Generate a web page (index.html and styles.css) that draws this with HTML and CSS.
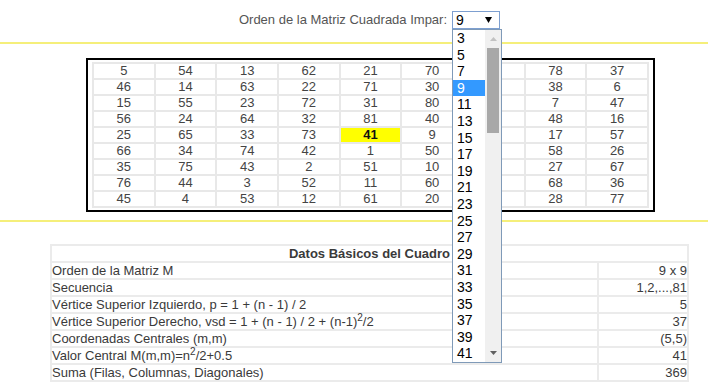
FILE: index.html
```html
<!DOCTYPE html>
<html lang="es">
<head>
<meta charset="utf-8">
<title>Cuadrado Mágico</title>
<link rel="stylesheet" href="styles.css">
</head>
<body>
<header class="controls">
  <label class="controls__label">Orden de la Matriz Cuadrada Impar:</label><div class="select">
    <span class="select__value">9</span>
    <svg class="select__arrow" width="7" height="6" viewBox="0 0 7 6"><path d="M0 0H7L3.5 6Z" fill="#000"/></svg>
    <div class="dropdown">
      <ul class="dropdown__list">
        <li>3</li><li>5</li><li>7</li><li class="is-selected">9</li><li>11</li><li>13</li><li>15</li><li>17</li><li>19</li><li>21</li>
        <li>23</li><li>25</li><li>27</li><li>29</li><li>31</li><li>33</li><li>35</li><li>37</li><li>39</li><li>41</li>
      </ul>
      <div class="dropdown__scroll">
        <div class="dropdown__btn"><svg width="7" height="4" viewBox="0 0 7 4"><path d="M0 4H7L3.5 0Z" fill="#c2c2c2"/></svg></div>
        <div class="dropdown__thumb"></div>
        <div class="dropdown__spacer"></div>
        <div class="dropdown__btn"><svg width="7" height="4" viewBox="0 0 7 4"><path d="M0 0H7L3.5 4Z" fill="#606060"/></svg></div>
      </div>
    </div>
  </div>
</header>
<div class="rule"></div>
<section class="matrix">
  <div class="matrix__frame">
    <table class="matrix__table">
      <tr><td>5</td><td>54</td><td>13</td><td>62</td><td>21</td><td>70</td><td>29</td><td>78</td><td>37</td></tr>
      <tr><td>46</td><td>14</td><td>63</td><td>22</td><td>71</td><td>30</td><td>79</td><td>38</td><td>6</td></tr>
      <tr><td>15</td><td>55</td><td>23</td><td>72</td><td>31</td><td>80</td><td>39</td><td>7</td><td>47</td></tr>
      <tr><td>56</td><td>24</td><td>64</td><td>32</td><td>81</td><td>40</td><td>8</td><td>48</td><td>16</td></tr>
      <tr><td>25</td><td>65</td><td>33</td><td>73</td><td class="is-center">41</td><td>9</td><td>49</td><td>17</td><td>57</td></tr>
      <tr><td>66</td><td>34</td><td>74</td><td>42</td><td>1</td><td>50</td><td>18</td><td>58</td><td>26</td></tr>
      <tr><td>35</td><td>75</td><td>43</td><td>2</td><td>51</td><td>10</td><td>59</td><td>27</td><td>67</td></tr>
      <tr><td>76</td><td>44</td><td>3</td><td>52</td><td>11</td><td>60</td><td>19</td><td>68</td><td>36</td></tr>
      <tr><td>45</td><td>4</td><td>53</td><td>12</td><td>61</td><td>20</td><td>69</td><td>28</td><td>77</td></tr>
    </table>
  </div>
</section>
<div class="rule rule--second"></div>
<section class="info">
  <table class="info__table">
    <tr><th colspan="2">Datos Básicos del Cuadro</th></tr>
    <tr><td>Orden de la Matriz M</td><td class="info__value">9 x 9</td></tr>
    <tr><td>Secuencia</td><td class="info__value">1,2,...,81</td></tr>
    <tr><td>Vértice Superior Izquierdo, p = 1 + (n - 1) / 2</td><td class="info__value">5</td></tr>
    <tr><td>Vértice Superior Derecho, vsd = 1 + (n - 1) / 2 + (n-1)<sup>2</sup>/2</td><td class="info__value">37</td></tr>
    <tr><td>Coordenadas Centrales (m,m)</td><td class="info__value">(5,5)</td></tr>
    <tr><td>Valor Central M(m,m)=n<sup>2</sup>/2+0.5</td><td class="info__value">41</td></tr>
    <tr><td>Suma (Filas, Columnas, Diagonales)</td><td class="info__value">369</td></tr>
  </table>
</section>
</body>
</html>
```
FILE: styles.css
```css
html, body {
  margin: 0;
  padding: 0;
  background: #fff;
}
body {
  font-family: "Liberation Sans", Arial, sans-serif;
  font-size: 13px;
  color: #444;
  overflow: hidden;
}

/* header control */
.controls {
  height: 31px;
  padding: 11px 0 0 31px;
  text-align: center;
  line-height: 18px;
}
.controls__label {
  color: #555;
  vertical-align: top;
}
.select {
  position: relative;
  display: inline-block;
  vertical-align: top;
  box-sizing: border-box;
  width: 48px;
  height: 18px;
  margin-left: 5px;
  border: 1px solid #7d9fd0;
  background: #fff;
  text-align: left;
  font-size: 14px;
  line-height: 16px;
  color: #000;
}
.select__value {
  padding-left: 3px;
}
.select__arrow {
  position: absolute;
  right: 7px;
  top: 5px;
}
.dropdown {
  position: absolute;
  left: -1px;
  top: 17px;
  z-index: 5;
  box-sizing: border-box;
  width: 50px;
  height: 334px;
  border: 1px solid #7f9ab8;
  background: #fff;
  display: flex;
}
.dropdown__list {
  list-style: none;
  margin: 0;
  padding: 0;
  width: 32px;
  overflow: hidden;
}
.dropdown__list li {
  height: 16.6px;
  line-height: 16.6px;
  padding-left: 4px;
  font-size: 14px;
  color: #000;
}
.dropdown__list li.is-selected {
  background: #3399ff;
  color: #fff;
}
.dropdown__scroll {
  width: 16px;
  background: #f0f0f0;
  display: flex;
  flex-direction: column;
}
.dropdown__btn {
  height: 18px;
  display: flex;
  align-items: center;
  justify-content: center;
}
.dropdown__btn svg {
  display: block;
}
.dropdown__thumb {
  height: 85px;
  margin: 0 2px;
  background: #a8a8a8;
}
.dropdown__spacer {
  flex: 1;
}

/* rules */
.rule {
  height: 2px;
  background: #f5ef7a;
}
.rule--second {
  margin-top: 8px;
}

/* matrix */
.matrix {
  padding: 14px 0 0 33px;
  display: flex;
  justify-content: center;
}
.matrix__frame {
  border: 2px solid #000;
  padding: 2px 4px;
}
.matrix__table {
  width: 557px;
  border-spacing: 2px;
  background: #e8e8e8;
  table-layout: fixed;
}
.matrix__table td {
  background: #fff;
  height: 14px;
  line-height: 14px;
  padding: 0;
  text-align: center;
  color: #444;
}
.matrix__table td.is-center {
  background: #ffff00;
  font-weight: bold;
  color: #111;
}

/* info table */
.info {
  padding: 22px 0 0 31px;
  display: flex;
  justify-content: center;
}
.info__table {
  width: 639px;
  border-spacing: 2px;
  background: #ebebeb;
}
.info__table th,
.info__table td {
  background: #fff;
  padding: 0;
  line-height: 15px;
  color: #3a3a3a;
  text-align: left;
}
.info__table th {
  text-align: center;
  font-weight: bold;
}
.info__table td.info__value {
  width: 88px;
  text-align: right;
}
.info__table sup {
  font-size: 10px;
  line-height: 0;
}
```
